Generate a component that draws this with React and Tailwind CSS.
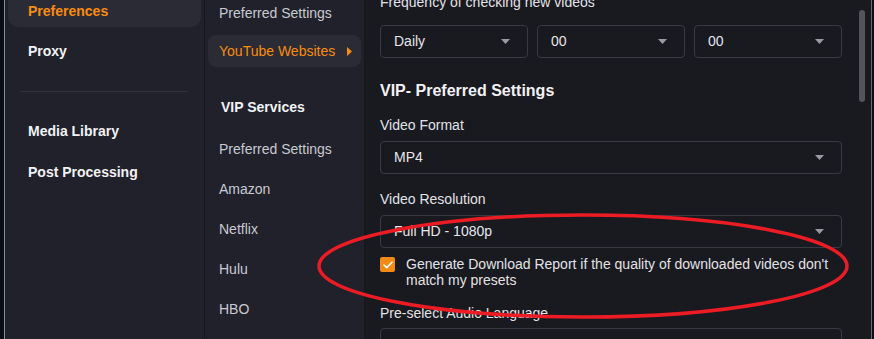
const font = { fontFamily: '"Liberation Sans", Arial, sans-serif' };

function Caret() {
  return (
    <svg width="9" height="5" viewBox="0 0 9 5" className="shrink-0">
      <path d="M0 0h9L4.5 5z" fill="#9a9aa2" />
    </svg>
  );
}

function Select({ value, className = '' }) {
  return (
    <div
      className={`flex h-[33px] shrink-0 items-center justify-between rounded-[4px] border border-[#3a3a44] bg-[#191920] pl-[13px] pr-[17px] text-[14px] text-[#e6e6ea] ${className}`}
    >
      <span>{value}</span>
      <Caret />
    </div>
  );
}

function Label({ children, className = '' }) {
  return <div className={`flex h-5 shrink-0 items-center text-[14px] text-[#e2e2e6] ${className}`}>{children}</div>;
}

export default function App() {
  const vip = ['Preferred Settings', 'Amazon', 'Netflix', 'Hulu', 'HBO'];

  return (
    <div className="relative flex h-[339px] w-[874px] overflow-hidden bg-[#191920]" style={font}>
      {/* window edge */}
      <div className="w-[4px] bg-[#0a0e18]" />
      <div className="w-px bg-[#8c8c94]" />

      {/* main nav */}
      <div className="flex w-[200px] flex-col border-r border-[#16161d] bg-[#21212b] px-[3px]">
        <div className="-mt-[13px] flex h-10 shrink-0 items-center rounded-[10px] bg-[#2b2b36] pl-[20px] pt-2 text-[14px] font-bold text-[#f98b0c]">
          Preferences
        </div>
        <div className="mt-1 flex h-10 shrink-0 items-center pl-[20px] text-[14px] font-bold text-[#f2f2f5]">Proxy</div>
        <div className="ml-[12px] mt-[20px] h-px w-[168px] shrink-0 bg-[#32323c]" />
        <div className="mt-[19px] flex h-10 shrink-0 items-center pl-[20px] text-[14px] font-bold text-[#f2f2f5]">Media Library</div>
        <div className="mt-px flex h-10 shrink-0 items-center pl-[20px] text-[14px] font-bold text-[#f2f2f5]">Post Processing</div>
      </div>

      {/* sub nav */}
      <div className="flex w-[160px] flex-col border-r border-[#16161d] bg-[#21212b] px-[3px]">
        <div className="-mt-[7px] flex h-10 shrink-0 items-center pl-[11px] text-[14px] text-[#c9c9d1]">Preferred Settings</div>
        <div className="mt-[2px] flex h-8 shrink-0 items-center justify-between rounded-[8px] bg-[#2b2b36] pl-[11px] pr-[9px] text-[14px] text-[#f98b0c]">
          <span>YouTube Websites</span>
          <svg width="5" height="9" viewBox="0 0 5 9">
            <path d="M0 0l5 4.5L0 9z" fill="#f98b0c" />
          </svg>
        </div>
        <div className="mt-[20px] flex h-10 shrink-0 items-center pl-[13px] text-[14px] font-bold text-[#f2f2f5]">VIP Services</div>
        {vip.map((v, i) => (
          <div
            key={v}
            className={`flex h-10 shrink-0 items-center pl-[11px] text-[14px] text-[#c9c9d1] ${i === 0 ? 'mt-[2px]' : ''}`}
          >
            {v}
          </div>
        ))}
      </div>

      {/* content */}
      <div className="relative flex flex-1 flex-col bg-[#191920] pl-[15px] pr-[29px]">
        <Label className="-mt-[8px]">Frequency of checking new videos</Label>
        <div className="mt-[13px] grid shrink-0 grid-cols-3 gap-[9px]">
          <Select value="Daily" />
          <Select value="00" />
          <Select value="00" />
        </div>
        <div className="mt-[22px] flex h-[22px] shrink-0 items-center text-[16px] font-bold text-[#f2f2f5]">
          VIP- Preferred Settings
        </div>
        <Label className="mt-[13px]">Video Format</Label>
        <Select value="MP4" className="mt-[6px]" />
        <Label className="mt-[15px]">Video Resolution</Label>
        <Select value="Full HD - 1080p" className="mt-[6px]" />
        <div className="mt-[9px] flex shrink-0 items-start gap-[11px]">
          <div className="flex h-[15px] w-[15px] shrink-0 items-center justify-center rounded-[2px] bg-[#f28a14]">
            <svg width="10" height="8" viewBox="0 0 10 8" fill="none">
              <path d="M1 4l2.8 2.6L9 1.2" stroke="#fff" strokeWidth="1.6" strokeLinecap="round" strokeLinejoin="round" />
            </svg>
          </div>
          <div className="-mt-px text-[14px] leading-4 text-[#e2e2e6]">
            Generate Download Report if the quality of downloaded videos don't match my presets
          </div>
        </div>
        <Label className="mt-[15px]">Pre-select Audio Language</Label>
        <Select value="" className="mt-[5px]" />

        {/* scrollbar */}
        <div className="absolute right-[6px] top-[10px] h-[92px] w-[6px] rounded-full bg-[#52555c]" />
      </div>

      {/* right window edge */}
      <div className="w-px bg-[#6a6a72]" />
      <div className="w-[2px] bg-[#0a0e18]" />

      {/* annotation */}
      <svg className="pointer-events-none absolute left-0 top-0" width="874" height="339">
        <ellipse cx="583" cy="266" rx="264" ry="51" fill="none" stroke="#ec1c24" strokeWidth="3.5" />
      </svg>
    </div>
  );
}
